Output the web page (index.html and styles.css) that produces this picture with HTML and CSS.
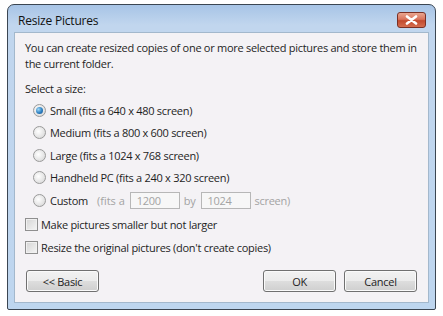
FILE: index.html
```html
<!DOCTYPE html>
<html>
<head>
<meta charset="utf-8">
<link rel="stylesheet" href="styles.css">
</head>
<body>
<div class="window">
  <div class="titlebar">
    <span class="title">Resize Pictures</span>
    <div class="close">
      <svg width="13" height="10" viewBox="0 0 13 10"><path d="M2 1.5 L11 8.5 M11 1.5 L2 8.5" stroke="#fff" stroke-width="2.6" stroke-linecap="round"/></svg>
    </div>
  </div>
  <div class="content">
    <p class="intro">You can create resized copies of one or more selected pictures and store them in the current folder.</p>
    <p class="label">Select a size:</p>
    <div class="options">
      <label class="opt"><span class="radio checked"></span>Small (fits a 640 x 480 screen)</label>
      <label class="opt"><span class="radio"></span>Medium (fits a 800 x 600 screen)</label>
      <label class="opt"><span class="radio"></span>Large (fits a 1024 x 768 screen)</label>
      <label class="opt"><span class="radio"></span>Handheld PC (fits a 240 x 320 screen)</label>
      <label class="opt custom"><span class="radio"></span>Custom <span class="dim first">(fits a</span><span class="field">1200</span><span class="dim">by</span><span class="field">1024</span><span class="dim">screen)</span></label>
    </div>
    <div class="checks">
      <label class="chk"><span class="box"></span>Make pictures smaller but not larger</label>
      <label class="chk"><span class="box"></span>Resize the original pictures (don't create copies)</label>
    </div>
    <div class="buttons">
      <button class="btn">&lt;&lt; Basic</button>
      <div class="spacer"></div>
      <button class="btn">OK</button>
      <button class="btn">Cancel</button>
    </div>
  </div>
</div>
</body>
</html>
```
FILE: styles.css
```css
html, body { margin: 0; padding: 0; background: #ffffff; }
body { font-family: "Open Sans", "Noto Sans", sans-serif; font-size: 11px; color: #1e1e1e; letter-spacing: -0.28px; }
.window {
  margin: 4px 0 0 7px;
  width: 427px;
  height: 304px;
  border: 1px solid #3b4652;
  border-radius: 7px 7px 2px 2px;
  background: linear-gradient(#a7c4e6 0px, #c1d6ee 20px, #bed6ef 100%);
  box-sizing: content-box;
  display: flex;
  flex-direction: column;
}
.titlebar {
  height: 27px;
  display: flex;
  align-items: center;
  padding: 0 9px 0 10px;
}
.title { font-size: 12px; color: #111; flex: 1; padding-top: 3px; letter-spacing: -0.2px; }
.close {
  width: 27px; height: 14px;
  border: 1px solid #7a3025;
  border-radius: 3px;
  background: linear-gradient(#e9a690 0%, #d9745d 45%, #c24a2e 55%, #d56d4f 100%);
  display: flex; align-items: center; justify-content: center;
  margin-top: 3px;
}
.content {
  margin: 0 6px 6px 6px;
  flex: 1;
  background: #f4f2f5;
  border: 1px solid #a3b8cc;
  padding: 7px 10px 0 10px;
}
p { margin: 0; }
.intro { line-height: 16px; width: 392px; }
.label { margin-top: 9px; line-height: 16px; }
.options { margin-top: 5px; display: flex; flex-direction: column; gap: 6.5px; padding-left: 8px; }
.opt { display: flex; align-items: center; height: 16px; }
.radio {
  width: 11px; height: 11px; border-radius: 50%;
  border: 1px solid #9a9a9a;
  background: radial-gradient(circle at 40% 40%, #ffffff 0%, #e4e4e4 60%, #cfcfcf 100%);
  margin-right: 4px;
  position: relative;
  flex: none;
}
.radio.checked::after {
  content: ""; position: absolute; left: 2px; top: 2px; width: 7px; height: 7px; border-radius: 50%;
  background: radial-gradient(circle at 35% 35%, #9fd8f7 0%, #2c7fc1 55%, #174e8a 100%);
}
.custom .dim { color: #a3a3a3; margin-left: 4px; }
.custom .dim.first { margin-left: 9px; letter-spacing: 0; }
.field {
  width: 50px; height: 17px; box-sizing: border-box; border: 1px solid #b7b7b7; background: #f7f7f7;
  color: #a3a3a3; padding-left: 6px; margin-left: 5px; line-height: 15px;
}
.checks { margin-top: 8px; display: flex; flex-direction: column; gap: 7px; }
.chk { display: flex; align-items: center; height: 16px; }
.box {
  width: 11px; height: 11px; border: 1px solid #8f8f8f;
  background: linear-gradient(135deg, #d4d4d4, #f5f5f5);
  box-shadow: inset 0 0 0 1px #f0f0f0;
  margin-right: 3px; flex: none;
}
.buttons { display: flex; margin-top: 15px; gap: 8px; padding-left: 1px; padding-right: 1px; }
.spacer { flex: 1; }
.btn {
  width: 73px; height: 22px;
  border: 1px solid #707070; border-radius: 3px;
  background: linear-gradient(#f2f2f2 0%, #ebebeb 50%, #dddddd 51%, #cfcfcf 100%);
  font-family: inherit; font-size: 11px; color: #1e1e1e; padding: 0; letter-spacing: -0.28px;
  box-shadow: inset 0 0 0 1px #fafafa;
}
```
